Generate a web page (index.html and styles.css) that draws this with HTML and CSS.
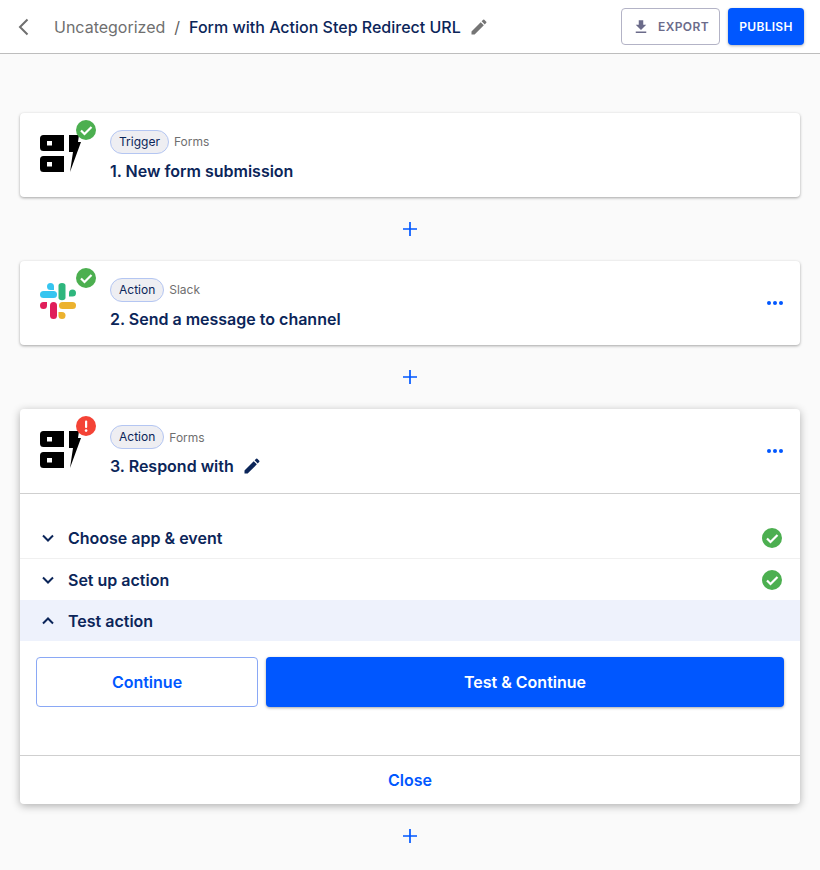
FILE: index.html
```html
<!DOCTYPE html>
<html lang="en">
<head>
  <meta charset="UTF-8">
  <title>Form with Action Step Redirect URL</title>
  <link rel="stylesheet" href="styles.css">
</head>
<body>
  <!-- Top bar -->
  <div class="topbar">
    <div class="back">
      <svg viewBox="0 0 24 24" width="24" height="24" fill="none" stroke="#6f6f6f" stroke-width="2"><path d="M15.5 4.5 8 12l7.5 7.5"></path></svg>
    </div>
    <div class="crumb">Uncategorized</div>
    <div class="crumb-sep">/</div>
    <div class="title">Form with Action Step Redirect URL</div>
    <svg class="title-edit" viewBox="0 0 24 24" width="20" height="20" fill="#757575"><path d="M3 17.25V21h3.75L17.81 9.94l-3.75-3.75L3 17.25zM20.71 7.04a1 1 0 0 0 0-1.41l-2.34-2.34a1 1 0 0 0-1.41 0l-1.83 1.83 3.75 3.75 1.83-1.83z"></path></svg>
    <div class="topbar-actions">
      <button class="btn-export">
        <svg viewBox="0 0 24 24" width="18" height="18" fill="#6b6b8a"><path d="M19 9h-4V3H9v6H5l7 7 7-7zM5 18v2h14v-2H5z"></path></svg>
        EXPORT
      </button>
      <button class="btn-publish">PUBLISH</button>
    </div>
  </div>

  <div class="flow">
    <!-- Step 1 -->
    <div class="card">
      <div class="step-head">
        <div class="app-icon">
          <svg viewBox="0 0 42 37" width="42" height="37"><use href="#forms-logo"></use></svg>
          <svg class="status" viewBox="0 0 20 20" width="20" height="20"><use href="#ok-badge"></use></svg>
        </div>
        <div class="step-text">
          <div class="step-meta"><span class="chip">Trigger</span><span class="app-name">Forms</span></div>
          <div class="step-name">1. New form submission</div>
        </div>
      </div>
    </div>
    <div class="add">
      <svg viewBox="0 0 14 14" width="14" height="14" stroke="#0057ff" stroke-width="1.7"><path d="M7 0v14M0 7h14"></path></svg>
    </div>

    <!-- Step 2 -->
    <div class="card">
      <div class="step-head">
        <div class="app-icon">
          <svg class="slack" viewBox="0 0 36 36" width="36" height="36">
            <rect x="0" y="14" width="17" height="7" rx="3.5" fill="#36c5f0" transform="translate(0 -6)"></rect>
            <path d="M10 0h.5A3.5 3.5 0 0 1 14 3.5V7h-3.5a3.500 3.500 0 0 1 0-7z" fill="#36c5f0"></path>
            <rect x="19" y="0" width="7" height="22" rx="3.500" fill="#2eb67d" transform="translate(-0.500 0) scale(1 .78)"></rect>
            <path d="M29 8a3.500 3.500 0 0 1 7 0 3.500 3.500 0 0 1-3.500 3.500H29z" fill="#2eb67d" transform="translate(0 2)"></path>
            <rect x="19" y="20" width="17" height="7" rx="3.500" fill="#ecb22e" transform="translate(0 -1)"></rect>
            <path d="M18.500 29H22a3.500 3.500 0 1 1-3.500 3.500z" fill="#ecb22e"></path>
            <rect x="10" y="19" width="7" height="17" rx="3.500" fill="#e01e5a"></rect>
            <path d="M0 22.500A3.500 3.500 0 0 1 3.500 19H7v3.500a3.500 3.500 0 0 1-7 0z" fill="#e01e5a"></path>
          </svg>
          <svg class="status" viewBox="0 0 20 20" width="20" height="20"><use href="#ok-badge"></use></svg>
        </div>
        <div class="step-text">
          <div class="step-meta"><span class="chip">Action</span><span class="app-name">Slack</span></div>
          <div class="step-name">2. Send a message to channel</div>
        </div>
        <div class="more"><i></i><i></i><i></i></div>
      </div>
    </div>
    <div class="add">
      <svg viewBox="0 0 14 14" width="14" height="14" stroke="#0057ff" stroke-width="1.7"><path d="M7 0v14M0 7h14"></path></svg>
    </div>

    <!-- Step 3 -->
    <div class="card card-open">
      <div class="step-head step-head-line">
        <div class="app-icon">
          <svg viewBox="0 0 42 37" width="42" height="37"><use href="#forms-logo"></use></svg>
          <svg class="status" viewBox="0 0 20 20" width="20" height="20">
            <circle cx="10" cy="10" r="10" fill="#f44336"></circle>
            <rect x="9" y="4.500" width="2.200" height="7.500" rx="1" fill="#fff"></rect>
            <circle cx="10.100" cy="14.600" r="1.300" fill="#fff"></circle>
          </svg>
        </div>
        <div class="step-text">
          <div class="step-meta"><span class="chip">Action</span><span class="app-name">Forms</span></div>
          <div class="step-name">3. Respond with
            <svg class="name-edit" viewBox="0 0 24 24" width="20" height="20" fill="#0b2559"><path d="M3 17.25V21h3.750L17.810 9.940l-3.750-3.750L3 17.250zM20.710 7.040a1 1 0 0 0 0-1.410l-2.340-2.340a1 1 0 0 0-1.410 0l-1.830 1.830 3.750 3.750 1.830-1.830z"></path></svg>
          </div>
        </div>
        <div class="more"><i></i><i></i><i></i></div>
      </div>

      <div class="sections">
        <div class="section section-line">
          <svg viewBox="0 0 12 8" width="12" height="8" fill="none" stroke="#0b2559" stroke-width="2"><path d="M1 1.500l5 5 5-5"></path></svg>
          <span class="section-name">Choose app &amp; event</span>
          <svg class="section-ok" viewBox="0 0 20 20" width="20" height="20"><use href="#ok-badge"></use></svg>
        </div>
        <div class="section">
          <svg viewBox="0 0 12 8" width="12" height="8" fill="none" stroke="#0b2559" stroke-width="2"><path d="M1 1.500l5 5 5-5"></path></svg>
          <span class="section-name">Set up action</span>
          <svg class="section-ok" viewBox="0 0 20 20" width="20" height="20"><use href="#ok-badge"></use></svg>
        </div>
        <div class="section section-active">
          <svg viewBox="0 0 12 8" width="12" height="8" fill="none" stroke="#0b2559" stroke-width="2"><path d="M1 6.500l5-5 5 5"></path></svg>
          <span class="section-name">Test action</span>
        </div>
      </div>

      <div class="step-buttons">
        <button class="btn-continue">Continue</button>
        <button class="btn-test">Test &amp; Continue</button>
      </div>

      <div class="step-close">Close</div>
    </div>
    <div class="add">
      <svg viewBox="0 0 14 14" width="14" height="14" stroke="#0057ff" stroke-width="1.7"><path d="M7 0v14M0 7h14"></path></svg>
    </div>
  </div>

  <!-- Shared icons -->
  <svg class="defs" width="0" height="0">
    <defs>
      <g id="forms-logo">
        <path fill="#000" d="M3.500 0H24v16H3.500A3.500 3.500 0 0 1 0 12.500v-9A3.500 3.500 0 0 1 3.500 0zM3.500 21H24v16H3.500A3.500 3.500 0 0 1 0 33.500v-9A3.500 3.500 0 0 1 3.500 21z"></path>
        <rect x="7" y="6" width="5" height="4.500" fill="#fff"></rect>
        <rect x="7" y="27" width="5" height="4.500" fill="#fff"></rect>
        <path fill="#000" d="M30 0h10l-1 7h3L31 37l3-20h-4z" transform="translate(-1 0)"></path>
      </g>
      <g id="ok-badge">
        <circle cx="10" cy="10" r="10" fill="#4caf50"></circle>
        <path d="M5 10.500l3.500 3.500L15.500 7" fill="none" stroke="#fff" stroke-width="2.200"></path>
      </g>
    </defs>
  </svg>
</body>
</html>
```

FILE: styles.css
```css
* {
  margin: 0;
  padding: 0;
  box-sizing: border-box;
  font-family: Inter, "Liberation Sans", sans-serif;
}

body {
  background-color: #fafafa;
  color: #0b2559;
}

button {
  cursor: pointer;
  border: none;
}

.topbar {
  height: 54px;
  background-color: #fff;
  border-bottom: 1px solid #bdbdbd;
  display: flex;
  align-items: center;
  padding-left: 12px;
}

.back {
  display: flex;
  width: 42px;
}

.crumb {
  font-size: 16px;
  color: #6f6f6f;
}

.crumb-sep {
  font-size: 16px;
  color: #5f5f5f;
  margin: 0 9px;
}

.title {
  font-size: 16px;
  font-weight: 500;
  color: #0b2559;
}

.title-edit {
  margin-left: 8px;
}

.topbar-actions {
  margin-left: auto;
  margin-right: 16px;
  display: flex;
  gap: 8px;
}

.btn-export {
  width: 99px;
  height: 37px;
  background-color: #fff;
  border: 1px solid #b3b3c6;
  border-radius: 4px;
  color: #6b6b8a;
  font-size: 12px;
  font-weight: 600;
  letter-spacing: 0.4px;
  display: flex;
  align-items: center;
  justify-content: center;
  gap: 8px;
}

.btn-publish {
  width: 76px;
  height: 37px;
  background-color: #0057ff;
  border-radius: 4px;
  color: #fff;
  font-size: 12px;
  font-weight: 600;
  letter-spacing: 0.3px;
  box-shadow: 0 1px 3px rgba(0, 0, 0, 0.3);
}

.flow {
  padding: 59px 20px 0;
}

.card {
  background-color: #fff;
  border-radius: 4px;
  box-shadow: 0 1px 3px rgba(0, 0, 0, 0.35);
}

.card-open {
  box-shadow: 0 2px 8px rgba(0, 0, 0, 0.3);
}

.step-head {
  height: 84px;
  display: flex;
  align-items: center;
  padding: 0 20px;
  position: relative;
}

.step-head-line {
  height: 85px;
  border-bottom: 1px solid #cfcfcf;
  padding-bottom: 1px;
}

.app-icon {
  width: 70px;
  height: 84px;
  position: relative;
  flex-shrink: 0;
}

.app-icon > svg:first-child {
  position: absolute;
  left: 0;
  top: 22px;
}

.app-icon > .slack {
  left: 3px;
  top: 24px;
}

.status {
  position: absolute;
  left: 36px;
  top: 7px;
}

.step-text {
  display: flex;
  flex-direction: column;
  gap: 6px;
  margin-top: 1px;
}

.step-meta {
  display: flex;
  align-items: center;
  gap: 5px;
}

.chip {
  height: 24px;
  padding: 0 8px;
  border: 1px solid #b4c6f2;
  border-radius: 12px;
  background-color: #eeeef2;
  font-size: 12px;
  line-height: 22px;
  color: #0b2559;
}

.app-name {
  font-size: 12px;
  color: #6f6f6f;
}

.step-name {
  font-size: 16px;
  font-weight: 600;
  line-height: 22px;
  display: flex;
  align-items: center;
  gap: 8px;
}

.more {
  margin-left: auto;
  margin-right: -3px;
  display: flex;
  gap: 2px;
}

.more i {
  width: 4px;
  height: 4px;
  border-radius: 50%;
  background-color: #0057ff;
}

.sections {
  margin-top: 24px;
}

.section {
  height: 41px;
  display: flex;
  align-items: center;
  padding: 0 18px 0 22px;
}

.section-line {
  border-bottom: 1px solid #f0f0f0;
}

.section-active {
  background-color: #eef2fc;
}

.section-name {
  font-size: 16px;
  font-weight: 600;
  margin-left: 14px;
}

.section-ok {
  margin-left: auto;
}

.step-buttons {
  display: flex;
  gap: 8px;
  padding: 16px 16px 48px;
}

.btn-continue {
  width: 222px;
  height: 50px;
  background-color: #fff;
  border: 1px solid #8aa8f5;
  border-radius: 4px;
  color: #0057ff;
  font-size: 16px;
  font-weight: 600;
}

.btn-test {
  flex: 1;
  height: 50px;
  background-color: #0057ff;
  border-radius: 4px;
  color: #fff;
  font-size: 16px;
  font-weight: 600;
  box-shadow: 0 1px 3px rgba(0, 0, 0, 0.35);
}

.step-close {
  height: 49px;
  border-top: 1px solid #cfcfcf;
  color: #0057ff;
  font-size: 16px;
  font-weight: 600;
  display: flex;
  align-items: center;
  justify-content: center;
}

.add {
  height: 64px;
  display: flex;
  align-items: center;
  justify-content: center;
}

.defs {
  position: absolute;
}
```
